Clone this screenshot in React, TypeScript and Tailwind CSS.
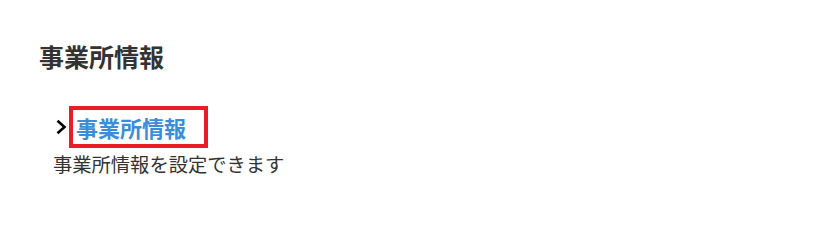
export default function App() {
  return (
    <div
      className="h-[226px] w-[818px] bg-white pl-[39px] pt-[41px] text-[#333]"
      style={{ fontFamily: '"Noto Sans CJK JP", "Noto Sans", sans-serif' }}
    >
      <h2 className="text-[25px] font-bold leading-[30px]">事業所情報</h2>
      <div className="mt-[35px] pl-[14px]">
        <div className="flex items-center">
          <svg width="15" height="16" viewBox="0 0 15 16" className="mr-[1px]">
            <path d="M4.5 1.8 L11.5 8 L4.5 14.2" fill="none" stroke="#000" strokeWidth="2.6" />
          </svg>
          <a className="border-4 border-[#ec1c24] pl-[3px] pr-[18px] text-[22px] font-bold leading-[34px] text-[#3b8ddb]">
            事業所情報
          </a>
        </div>
        <p className="mt-[2px] text-[19.3px] leading-[28px]">事業所情報を設定できます</p>
      </div>
    </div>
  );
}
